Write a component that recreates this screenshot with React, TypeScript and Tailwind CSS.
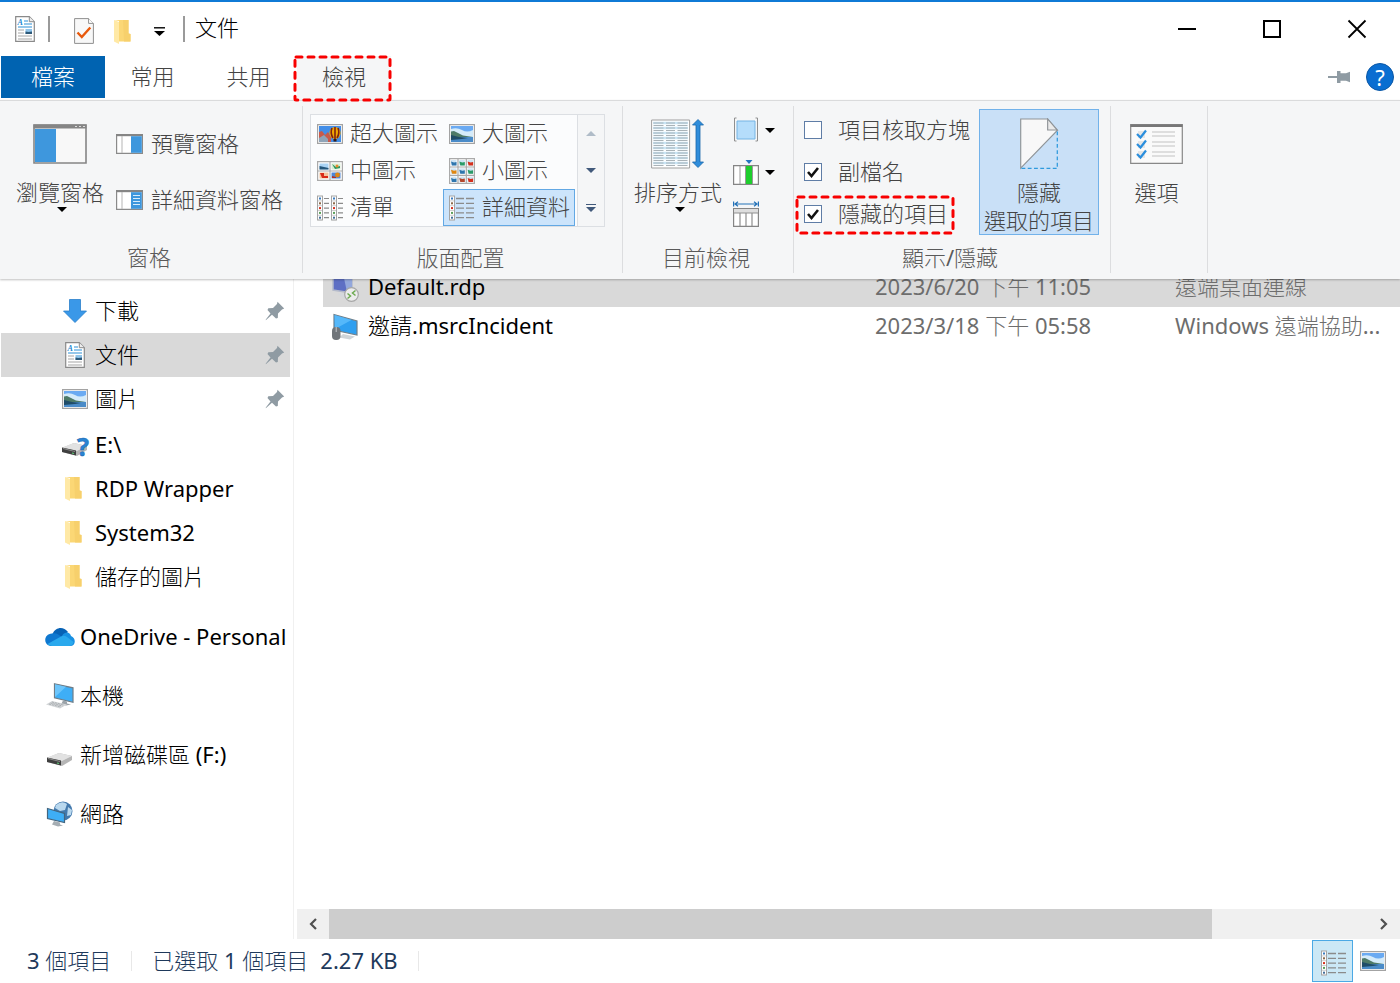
import React from 'react';

type IconProps = { className?: string };

function DocumentIcon({ className = '' }: IconProps) {
  return (
    <svg className={`h-[26px] w-5 shrink-0 overflow-visible ${className}`} viewBox="0 0 20 26">
      <path d="M.7.7h13.6l5 5v19.6H.7z" fill="#fff" stroke="#8a8a8a" strokeWidth="1.2" />
      <path d="M14.3.7v5h5" fill="#eee" stroke="#8a8a8a" />
      <text x="2.5" y="8.5" fontSize="8" fontStyle="italic" fontWeight="700" fill="#1a86d0" fontFamily="Liberation Serif, serif">A</text>
      <path d="M9 5h4M9 8h8M3 11h14" stroke="#2d8fd5" strokeWidth="1.2" />
      <path d="M3 14h6M3 17h6M3 20h14M3 23h14" stroke="#a5a5a5" strokeWidth="1.1" />
      <path d="M10.5 13H17v5h-6.5z" fill="#8fc4ea" />
      <path d="M10.5 15.5l3 .5 3.5-.5V18h-6.5z" fill="#2c5878" />
    </svg>
  );
}

function CheckedPageIcon() {
  return (
    <svg className="h-[26px] w-5 shrink-0" viewBox="0 0 20 26">
      <path d="M.6.6h14l4.8 4.8v20H.6z" fill="#f8f8f8" stroke="#909090" />
      <path d="M14.6.6v4.8h4.8" fill="#fff" stroke="#909090" />
      <path d="M3.500 14.500l4.300 4.500 8.500-9.500" fill="none" stroke="#e8590c" strokeWidth="2.400" />
    </svg>
  );
}

function FolderIcon() {
  return (
    <svg className="h-[26px] w-5 shrink-0" viewBox="2 -1 20 26">
      <path d="M2 1h14.500v13.500l2 .5v7.500H7V2z" fill="#fbd775" />
      <path d="M11 1h5.500v13.500l2 .5v7.500H12z" fill="#f7d06c" />
      <path d="M2 1l5 2v22L2 22.500z" fill="#ffe9a6" />
    </svg>
  );
}

function LandscapeIcon() {
  return (
    <svg className="h-5 w-[26px] shrink-0" viewBox="0 0 26 20">
      <path d="M.6.6h24.800v18.800H.6z" fill="#fff" stroke="#a3a3a3" strokeWidth="1.200" />
      <path d="M2 2h22v16H2z" fill="#6aaaf2" />
      <path d="M2 5q6-2 11 1t11 0v8H2z" fill="#d4ebfa" />
      <path d="M2 7.500l3-.5 4 2 5 2.500 10 1.500v1H2z" fill="#4d7a68" />
      <path d="M2 13h22v5H2z" fill="#4a8bc8" />
      <path d="M2 11l8 2 9 1-6 1-11 1z" fill="#1f4c68" />
    </svg>
  );
}

function BalloonIcon() {
  return (
    <svg className="h-5 w-[26px] shrink-0" viewBox="0 0 26 20">
      <path d="M.6.6h24.800v18.800H.6z" fill="#fff" stroke="#a3a3a3" strokeWidth="1.200" />
      <path d="M2 2h22v16H2z" fill="#438ee8" />
      <path d="M2 8l3-1 3 4 3-3 3 5v5H2z" fill="#c95a4a" />
      <path d="M2 14l5-3 4 4v3H2z" fill="#8fa4b8" />
      <ellipse cx="18" cy="9" rx="5.600" ry="6" fill="#f0a800" />
      <path d="M15 4q-2 5 1 10M18 3v12M21 4q2 5-1 10" stroke="#7d2113" strokeWidth="1.600" fill="none" />
      <path d="M16.500 15h3v2.500h-3z" fill="#3b1d12" />
    </svg>
  );
}

function MediumIcon() {
  return (
    <svg className="h-5 w-[26px] shrink-0" viewBox="0 0 26 20">
      <path d="M.6.6h24.800v18.800H.6zM13 .6v18.800M.6 10h24.800" fill="#fff" stroke="#aaa" strokeWidth="1.200" />
      <path d="M2.500 2.500h9v6h-9z" fill="#a9d3f5" />
      <path d="M2.500 5l9 2v1.500h-9z" fill="#23567b" />
      <path d="M14.500 2.500h9v6h-9z" fill="#d8ecd2" />
      <path d="M15 3l4 3 4-1v2l-5 1z" fill="#27985f" />
      <circle cx="20" cy="5" r="1.500" fill="#e58a2a" />
      <path d="M2.500 11.500h9v6h-9z" fill="#f2c29a" />
      <path d="M3 12h4v3h4v2H5z" fill="#d92a16" />
      <path d="M14.500 11.500h9v6h-9z" fill="#4d86d6" />
      <circle cx="20.500" cy="14" r="2.400" fill="#e0860f" />
      <path d="M15 15l4 1v1h-4z" fill="#b03022" />
    </svg>
  );
}

const smallTiles = ['#2f76ad', '#2b9b68', '#d5301d', '#e0860f', '#2f76ad', '#2b9b68', '#2f76ad', '#b4472c', '#d5301d'];

function SmallIcon() {
  return (
    <svg className="h-[26px] w-[26px] shrink-0" viewBox="0 0 26 26">
      <path d="M.6.6h24.800v24.800H.6zM9 .6v24.800M17.300.6v24.800M.6 9h24.800M.6 17.300h24.800" fill="#fff" stroke="#aaa" strokeWidth="1.200" />
      {smallTiles.map((color, i) => (
        <g key={i} transform={`translate(${2 + (i % 3) * 8.3} ${2 + Math.floor(i / 3) * 8.3})`}>
          <rect width="5.500" height="5.500" fill="#cfe5f5" />
          <path d="M0 1.500l3 1 2.500-.5v3.500H1z" fill={color} />
        </g>
      ))}
    </svg>
  );
}

const dotColors = ['#3a7cc0', '#8c6a4a', '#d5301d', '#5aa05a', '#44709b'];

function Strip({ x }: { x: number }) {
  return (
    <g>
      <rect x={x + 0.5} y="1" width="5" height="24" fill="#fff" stroke="#a5a5a5" />
      {dotColors.map((color, i) => (
        <g key={i}>
          <rect x={x + 2} y={2.5 + i * 4.8} width="2" height="2" fill={color} />
          <path d={`M${x + 1} ${5.9 + i * 4.8}h4`} stroke="#c5c5c5" strokeWidth=".8" />
        </g>
      ))}
    </g>
  );
}

function ListIcon() {
  return (
    <svg className="h-[26px] w-[26px] shrink-0" viewBox="0 0 26 26">
      <Strip x={0} />
      <Strip x={14} />
      <path d="M7 3.500h5M7 8.300h5M7 13.100h5M7 17.900h5M7 22.700h5M21 3.500h5M21 8.300h5M21 13.100h5M21 17.900h5M21 22.700h5" stroke="#8b8b8b" strokeWidth="1.200" />
    </svg>
  );
}

function DetailsIcon() {
  return (
    <svg className="h-[26px] w-[26px] shrink-0" viewBox="0 0 26 26">
      <Strip x={0} />
      <path d="M7 3.500h8M7 8.300h8M7 13.100h8M7 17.900h8M7 22.700h8M17 3.500h8M17 8.300h8M17 13.100h8M17 17.900h8M17 22.700h8" stroke="#8b8b8b" strokeWidth="1.300" />
    </svg>
  );
}

function NavigationPaneIcon() {
  return (
    <svg className="h-10 w-[54px]" viewBox="0 0 54 40">
      <path d="M1 1h52v38H1z" fill="#f8f8f8" stroke="#858585" strokeWidth="1.600" />
      <path d="M.5.5h53v4H.5z" fill="#858585" />
      <path d="M42 2.500h2M46 2.500h2M50 2.500h2" stroke="#ddd" />
      <path d="M2 5h21v33H2z" fill="#3e97dd" />
    </svg>
  );
}

function PreviewPaneIcon({ detailed = false }: { detailed?: boolean }) {
  return (
    <svg className="h-5 w-[27px] shrink-0" viewBox="0 0 27 20">
      <path d="M.6.6h25.800v18.800H.6z" fill="#fff" stroke="#8a8a8a" strokeWidth="1.200" />
      <path d="M0 0h27v2.200H0z" fill="#858585" />
      <path d="M6 2v17" stroke="#b5b5b5" />
      <path d="M15 2.200h10.800v16.600H15z" fill="#3e97dd" />
      {detailed && <path d="M17 5.500h7M17 8.500h7M17 11.500h7M17 14.500h7" stroke="#d8ecfb" />}
    </svg>
  );
}

const sortRows = [4, 9, 14, 19, 24, 29, 34, 39, 44];

function SortIcon() {
  return (
    <svg className="h-[50px] w-[54px]" viewBox="0 0 54 50">
      <path d="M.6 1h38v48H.6z" fill="#fff" stroke="#9f9f9f" />
      {sortRows.map((y) => (
        <g key={y}>
          <path d={`M2 ${y}h35`} stroke="#c9e5f5" strokeWidth="2.600" />
          <path d={`M2.500 ${y}h10M15 ${y}h9M26.500 ${y}h10M2.500 ${y + 2.5}h10M15 ${y + 2.5}h9M26.500 ${y + 2.5}h10`} stroke="#aab3b8" />
        </g>
      ))}
      <path d="M47 .5l5.500 5.500h-3.500v37h3.500L47 48.500 41.500 43H45V6h-3.500z" fill="#2f8ddb" stroke="#1767ab" strokeWidth=".8" />
    </svg>
  );
}

function GroupByIcon() {
  return (
    <svg className="h-[26px] w-[26px]" viewBox="0 0 26 26">
      <path d="M3.500 1H1.500v23h2M22.500 1h2v23h-2" fill="none" stroke="#8f8f8f" />
      <path d="M4 4h18v18H4z" fill="#b5ddfb" stroke="#74b4e4" />
    </svg>
  );
}

function AddColumnsIcon() {
  return (
    <svg className="h-[26px] w-[26px]" viewBox="0 0 26 26">
      <path d="M.6 6.600h24.800v18.800H.6z" fill="#fff" stroke="#858585" strokeWidth="1.200" />
      <path d="M7 7v18M12.500 7v18M19.500 7v18" stroke="#999" />
      <path d="M13 7h6v18h-6z" fill="#1fce2e" />
      <path d="M12.500 1h7L16 5z" fill="#2675bf" />
    </svg>
  );
}

function SizeColumnsIcon() {
  return (
    <svg className="h-[26px] w-[26px]" viewBox="0 0 26 26">
      <path d="M.6.5v5M25.400.5v5M2 3h22M5 .7L2 3l3 2.300M21 .7L24 3l-3 2.300" fill="none" stroke="#2472b8" strokeWidth="1.200" />
      <path d="M.6 7.600h24.800v17.800H.6z" fill="#fff" stroke="#858585" strokeWidth="1.200" />
      <path d="M1 8h24v4H1z" fill="#dedede" />
      <path d="M1 12h24M7 12v13M13 12v13M19 12v13" stroke="#8f8f8f" strokeWidth="1.200" />
    </svg>
  );
}

function HiddenPageIcon() {
  return (
    <svg className="h-[54px] w-10" viewBox="0 0 40 54">
      <path d="M1 1h28l10 12L1 52z" fill="#f8f8f8" stroke="#8f9498" strokeWidth="1.200" />
      <path d="M29 1v11.500h10z" fill="#eaeaea" stroke="#8f9498" strokeWidth="1.200" />
      <path d="M39 14v38.300H1" fill="none" stroke="#2f9add" strokeWidth="1.300" strokeDasharray="4 2.500" />
    </svg>
  );
}

function OptionsIcon() {
  return (
    <svg className="h-10 w-[53px]" viewBox="0 0 53 40">
      <path d="M.7.7h51.600v38.600H.7z" fill="#fafafa" stroke="#888" strokeWidth="1.200" />
      <path d="M.5.500h52v2.500H.5z" fill="#777" />
      {[10, 20, 30].map((y) => (
        <g key={y}>
          <rect x="8" y={y - 3} width="7" height="7" fill="#e6e6e6" />
          <path d={`M7 ${y}l3.500 3.500 5.500-7`} fill="none" stroke="#2b8fdd" strokeWidth="2.200" />
          <path d={`M22 ${y - 2}h23M22 ${y + 2}h23`} stroke="#c2c2c2" />
        </g>
      ))}
    </svg>
  );
}

function DownloadIcon() {
  return (
    <svg className="h-6 w-6 shrink-0" viewBox="0 0 24 24">
      <path d="M6.500.5h11v11.500h6L12 23.500.5 12h6z" fill="#3a98e8" stroke="#2a7fca" strokeWidth=".8" />
    </svg>
  );
}

function DriveBody() {
  return (
    <>
      <path d="M1 9l12-5 13 3v4l-10 6-15-4z" fill="#b5b5b5" />
      <path d="M1 8.500L13 4l13 3-10 5z" fill="#e2e2e2" />
      <path d="M1 8.500L15 11.500v5L1 13z" fill="#3f3f3f" />
      <path d="M2 9.500l12 3" stroke="#8a8a8a" />
      <path d="M11 14l2 .5" stroke="#5fd07a" strokeWidth="1.200" />
    </>
  );
}

function DriveIcon() {
  return (
    <svg className="mt-2 h-5 w-7 shrink-0" viewBox="0 0 28 20">
      <DriveBody />
    </svg>
  );
}

function UnknownDriveIcon() {
  return (
    <svg className="mt-1 h-6 w-7 shrink-0 overflow-visible" viewBox="0 0 28 24">
      <g transform="translate(0 5)">
        <DriveBody />
      </g>
      <text x="16" y="22" fontSize="25" fontWeight="700" fill="#2a84d2" stroke="#1a66b0" strokeWidth=".5" fontFamily="Noto Sans, sans-serif">?</text>
    </svg>
  );
}

function CloudIcon() {
  return (
    <svg className="h-5 w-[30px] shrink-0" viewBox="0 0 30 20">
      <path d="M8 6C10 1 18-2 23 5l-9 8-9 3z" fill="#0762b5" />
      <path d="M7 19C-2 19-2 7 7 6.500c4-1 7 1 10 4l-6 8z" fill="#0f78d0" />
      <path d="M17 9c3-5 8-4 9 0 5 2 5 9 0 10H12z" fill="#1890e2" />
      <path d="M2.500 17L16 9.500q3-1.500 6 .5l6.500 5q-1 4-4.500 4H7q-3 0-4.500-2z" fill="#2aa9ed" />
    </svg>
  );
}

function ComputerIcon() {
  return (
    <svg className="h-[26px] w-7 shrink-0" viewBox="0 0 28 26">
      <path d="M8.500.8l18.500 4v14.500l-18.500-4.500z" fill="#3eaef6" stroke="#6f7d88" strokeWidth="1.200" />
      <path d="M9 1.300l11 2.500L9 14z" fill="#6cc5fb" />
      <path d="M17 17.500l4 1v2l4 1-5 1-5-1z" fill="#9ba3a9" />
      <path d="M6 18l15 3.500-7 4L0 21.500z" fill="#d3d6d8" />
      <path d="M3 21l12 3M6 19l12 3M4.500 20l12 3" stroke="#a0a5a8" strokeWidth=".8" strokeDasharray="2 1" />
    </svg>
  );
}

function NetworkIcon() {
  return (
    <svg className="h-[26px] w-7 shrink-0" viewBox="0 0 28 26">
      <circle cx="17" cy="10" r="9.500" fill="#4379ad" />
      <path d="M10 4q6-5 11-1l-2 6-5 1-5-3zM22 6l4 3-1 5-4 1z" fill="#b9d8ee" />
      <path d="M1.500 7.500l17 5v9l-17-4z" fill="#3eaef6" stroke="#43657f" strokeWidth="1.200" />
      <path d="M8 20l6 1.500v2l3 1-5 1-6-2z" fill="#a5adb3" />
    </svg>
  );
}

function RemoteDesktopIcon() {
  return (
    <svg className="h-7 w-7 shrink-0" viewBox="0 0 28 28">
      <path d="M2 2l19 3v14L2 16z" fill="#5e6fc4" stroke="#b4bacb" strokeWidth="1.500" />
      <path d="M13 4l8 1v14l-5-.7z" fill="#93a7dc" />
      <path d="M6 20l6-1 5 3-3 3z" fill="#d5d8dc" />
      <circle cx="20.500" cy="20.500" r="6.800" fill="#ececec" stroke="#a7a7a7" strokeWidth="1.200" />
      <path d="M16.500 19.500l3 2.500-3 2.500M24.500 16.500L21.500 19l3 2.500" fill="none" stroke="#6daa50" strokeWidth="1.500" />
    </svg>
  );
}

function AssistanceIcon() {
  return (
    <svg className="h-7 w-7 shrink-0" viewBox="0 0 28 28">
      <path d="M3 1.500l23 6.500v14L3 17z" fill="#2f9ff0" stroke="#70808c" strokeWidth="1.200" />
      <path d="M3.500 2l17 5L4 16z" fill="#55b8fa" />
      <path d="M12 21l12 2.500-5 3-11-2z" fill="#cfd4d8" />
      <rect x="1" y="14" width="8.500" height="13" rx="4" fill="#70757a" />
      <path d="M5.200 14v5" stroke="#c3c7ca" />
    </svg>
  );
}

function PinIcon({ className = '' }: IconProps) {
  return (
    <svg className={`h-5 w-5 shrink-0 ${className}`} viewBox="0 0 20 20">
      <path d="M12.500.8L19.200 7.500 17 8.500l-4 4-.2 4.500-1.800.5-4-3.800L.8 19.200.8 18.500 5.500 12.500 2.500 9l.8-1.800L8 7l4-4z" fill="#8f9ba3" />
    </svg>
  );
}

function Arrow({ className = '' }: IconProps) {
  return (
    <svg className={`h-[5px] w-[10px] shrink-0 ${className}`} viewBox="0 0 10 5">
      <path d="M0 0h10L5 5z" fill="currentColor" />
    </svg>
  );
}

// dashed marker drawn over the element it highlights
function Highlight({ className = '' }: IconProps) {
  return (
    <svg className={`pointer-events-none absolute z-20 overflow-visible ${className}`}>
      <rect width="100%" height="100%" rx="1" fill="none" stroke="#f80000" strokeWidth="3" strokeDasharray="6 6" strokeLinecap="round" />
    </svg>
  );
}

function TitleBar() {
  return (
    <header className="flex h-14 items-center border-t-2 border-[#0f7ad6] pl-[15px] pr-px">
      <DocumentIcon />
      <span className="ml-[13px] h-[26px] w-[2px] bg-[#9a9a9a]" />
      <button aria-label="內容" className="ml-6 mt-1"><CheckedPageIcon /></button>
      <button aria-label="新增資料夾" className="ml-5 mt-1"><FolderIcon /></button>
      <button aria-label="自訂快速存取工具列" className="ml-5 mt-1">
        <svg className="h-[9px] w-[11px]" viewBox="0 0 11 9">
          <path d="M0 .8h11" stroke="#000" strokeWidth="1.400" />
          <path d="M0 4h11L5.500 9z" />
        </svg>
      </button>
      <span className="ml-[18px] h-[26px] w-[2px] bg-[#9a9a9a]" />
      <h1 className="ml-[10px] flex-1 pb-1 text-black">文件</h1>
      <button aria-label="最小化" className="flex h-full w-[85px] items-center justify-center">
        <svg className="h-5 w-5" viewBox="0 0 20 20"><path d="M1 10h18" stroke="#000" strokeWidth="2" /></svg>
      </button>
      <button aria-label="最大化" className="flex h-full w-[85px] items-center justify-center">
        <svg className="h-5 w-5" viewBox="0 0 20 20"><path d="M2 2h16v16H2z" fill="none" stroke="#000" strokeWidth="2" /></svg>
      </button>
      <button aria-label="關閉" className="flex h-full w-[85px] items-center justify-center">
        <svg className="h-5 w-5" viewBox="0 0 20 20"><path d="M1.500 1.500l17 17M18.500 1.500l-17 17" stroke="#000" strokeWidth="1.800" /></svg>
      </button>
    </header>
  );
}

function TabBar() {
  return (
    <nav className="flex h-11 pl-px text-[#444]">
      <button className="h-[42px] w-[104px] bg-[#0063b1] pb-[2px] text-white">檔案</button>
      <button className="h-[42px] w-[95px] pb-[2px]">常用</button>
      <button className="h-[42px] w-[97px] pb-[2px]">共用</button>
      <button className="relative h-11 w-[94px] bg-[#f5f6f7] pb-1">
        檢視
        <Highlight className="-left-[2px] top-[1px] h-[43px] w-[95px]" />
      </button>
      <div className="ml-auto flex h-[42px] items-center gap-4 pr-[6px]">
        <button aria-label="釘選功能區">
          <svg className="h-3 w-[22px]" viewBox="0 0 22 12">
            <path d="M0 6h9" stroke="#8f9ba3" strokeWidth="2" />
            <path d="M9 0h3.500v2.200h5.500L22 .8v10.400L18 9.800h-5.500V12H9z" fill="#8f9ba3" />
          </svg>
        </button>
        <button className="h-7 w-7 rounded-full border border-[#0a57a5] bg-[#0a6ed1] leading-6 text-white">?</button>
      </div>
    </nav>
  );
}

function Group({ label, className, children }: { label?: string; className: string; children: React.ReactNode }) {
  return (
    <section className={`relative flex shrink-0 flex-col pt-2 ${className}`}>
      <div className="flex h-[126px]">{children}</div>
      <h2 className="mt-2 h-7 pr-[5px] text-center leading-7 text-[#5a5a5a]">{label}</h2>
      <span className="absolute right-0 top-[5px] h-[167px] w-px bg-[#dcdddf]" />
    </section>
  );
}

const layouts = [
  { label: '超大圖示', icon: <BalloonIcon /> },
  { label: '大圖示', icon: <LandscapeIcon /> },
  { label: '中圖示', icon: <MediumIcon /> },
  { label: '小圖示', icon: <SmallIcon /> },
  { label: '清單', icon: <ListIcon /> },
  { label: '詳細資料', icon: <DetailsIcon /> },
];

function LayoutGallery() {
  return (
    <div className="ml-[7px] mt-[5px] flex h-[113px] w-[295px] border border-[#dcdfe3]">
      <div className="grid flex-1 grid-cols-[132px_132px] bg-[#fbfcfd]">
        {layouts.map(({ label, icon }) => (
          <button
            key={label}
            className={`flex h-[37px] items-center gap-[7px] whitespace-nowrap border pl-[5px] ${
              label === '詳細資料' ? 'border-[#62a8e4] bg-[#cce4fb]' : 'border-transparent'
            }`}
          >
            {icon}
            <span className="pb-[3px]">{label}</span>
          </button>
        ))}
      </div>
      <div className="grid w-[27px] grid-rows-3 border-l border-[#dcdfe3] text-[#41597b]">
        <button aria-label="上一列" className="flex items-center justify-center text-[#b0bcc8]"><Arrow className="rotate-180" /></button>
        <button aria-label="下一列" className="flex items-center justify-center"><Arrow /></button>
        <button aria-label="其他" className="flex flex-col items-center justify-center gap-[2px]">
          <span className="h-px w-[10px] bg-current" />
          <Arrow />
        </button>
      </div>
    </div>
  );
}

function Option({ label, checked = false, highlighted = false }: { label: string; checked?: boolean; highlighted?: boolean }) {
  return (
    <label className="relative flex h-[42px] items-center gap-4 whitespace-nowrap">
      <span className="relative flex">
        <input type="checkbox" defaultChecked={checked} className="peer h-[18px] w-[18px] appearance-none border border-[#5f7da6] bg-white" />
        <svg className="pointer-events-none absolute left-[3px] top-[3px] hidden h-3 w-3 peer-checked:block" viewBox="0 0 12 12">
          <path d="M1 6l3.500 4L11 2" fill="none" stroke="#111" strokeWidth="2.600" />
        </svg>
      </span>
      <span className="pb-[2px]">{label}</span>
      {highlighted && <Highlight className="-left-[7px] top-[4px] h-[36px] w-[156px]" />}
    </label>
  );
}

function Ribbon() {
  return (
    <div className="relative z-10 flex h-[179px] border-t border-[#dadbdc] bg-[#f5f6f7] text-[#444] shadow-[0_1px_2px_rgba(0,0,0,0.25)]">
      <Group label="窗格" className="w-[303px]">
        <button className="flex w-[120px] flex-col items-center pt-[15px]">
          <NavigationPaneIcon />
          <span className="mt-[14px] leading-7">瀏覽窗格</span>
          <Arrow className="ml-1 mt-px text-black" />
        </button>
        <div className="-ml-1 flex flex-col gap-7 whitespace-nowrap pt-[21px]">
          <button className="flex h-7 items-center gap-2"><PreviewPaneIcon /><span className="pb-[2px]">預覽窗格</span></button>
          <button className="flex h-7 items-center gap-2"><PreviewPaneIcon detailed /><span className="pb-[2px]">詳細資料窗格</span></button>
        </div>
      </Group>
      <Group label="版面配置" className="w-80">
        <LayoutGallery />
      </Group>
      <Group label="目前檢視" className="w-[171px]">
        <button className="flex w-[110px] flex-col items-center pt-[10px]">
          <SortIcon />
          <span className="mt-[9px] leading-7">排序方式</span>
          <Arrow className="ml-1 mt-px text-black" />
        </button>
        <div className="flex flex-col text-black">
          <button aria-label="群組依據" className="flex h-[42px] items-center gap-[6px]"><GroupByIcon /><Arrow /></button>
          <button aria-label="新增欄" className="flex h-[42px] items-center gap-[6px]"><AddColumnsIcon /><Arrow /></button>
          <button aria-label="調整欄寬" className="flex h-[42px] items-center"><SizeColumnsIcon /></button>
        </div>
      </Group>
      <Group label="顯示/隱藏" className="w-[317px]">
        <div className="w-[175px] shrink-0 pl-[10px]">
          <Option label="項目核取方塊" />
          <Option label="副檔名" checked />
          <Option label="隱藏的項目" checked highlighted />
        </div>
        <button className="ml-[10px] flex w-[120px] shrink-0 flex-col items-center whitespace-nowrap border border-[#72b2ea] bg-[#c9e0f7] pt-2 leading-7">
          <HiddenPageIcon />
          <span className="mt-2">隱藏</span>
          <span>選取的項目</span>
        </button>
      </Group>
      <Group className="w-[97px]">
        <button className="flex w-full flex-col items-center pr-[6px] pt-[15px]">
          <OptionsIcon />
          <span className="mt-[14px] leading-7">選項</span>
        </button>
      </Group>
    </div>
  );
}

const pinned = [
  { label: '下載', icon: <DownloadIcon /> },
  { label: '文件', icon: <DocumentIcon />, selected: true },
  { label: '圖片', icon: <LandscapeIcon /> },
];

const recent = [
  { label: 'E:\\', icon: <UnknownDriveIcon /> },
  { label: 'RDP Wrapper', icon: <FolderIcon /> },
  { label: 'System32', icon: <FolderIcon /> },
  { label: '儲存的圖片', icon: <FolderIcon /> },
];

const roots = [
  { label: 'OneDrive - Personal', icon: <CloudIcon /> },
  { label: '本機', icon: <ComputerIcon /> },
  { label: '新增磁碟區 (F:)', icon: <DriveIcon /> },
  { label: '網路', icon: <NetworkIcon /> },
];

function Sidebar() {
  return (
    <aside className="w-[294px] shrink-0 whitespace-nowrap border-r border-[#f0f0f0] pl-px pr-[3px] pt-[10px] text-black">
      {pinned.map(({ label, icon, selected }) => (
        <a key={label} href="#" className={`flex h-11 items-center pl-[60px] pr-[5px] ${selected ? 'bg-[#d9d9d9]' : ''}`}>
          <span className="mr-[6px] flex w-7 justify-center">{icon}</span>
          <span className="pb-[2px]">{label}</span>
          <PinIcon className="ml-auto" />
        </a>
      ))}
      <div className="mt-px">
        {recent.map(({ label, icon }) => (
          <a key={label} href="#" className="flex h-11 items-center pl-[60px]">
            <span className="mr-[6px] flex w-7 justify-center">{icon}</span>
            {label}
          </a>
        ))}
      </div>
      <div className="mt-[9px]">
        {roots.map(({ label, icon }) => (
          <a key={label} href="#" className="flex h-[59px] items-center pl-11">
            <span className="mr-[5px] flex w-[30px] justify-center">{icon}</span>
            <span className="pb-[2px]">{label}</span>
          </a>
        ))}
      </div>
    </aside>
  );
}

const files = [
  { name: 'Default.rdp', date: '2023/6/20 下午 11:05', type: '遠端桌面連線', icon: <RemoteDesktopIcon />, selected: true },
  { name: '邀請.msrcIncident', date: '2023/3/18 下午 05:58', type: 'Windows 遠端協助...', icon: <AssistanceIcon /> },
];

function FileList() {
  return (
    <main className="flex min-w-0 flex-1 flex-col">
      <div className="-mt-[11px] flex-1 pl-[29px]">
        <table className="w-full table-fixed whitespace-nowrap text-[#6d6d6d]">
          <tbody>
            {files.map(({ name, date, type, icon, selected }) => (
              <tr key={name} className={`h-[39px] ${selected ? 'bg-[#d9d9d9]' : ''}`}>
                <td className="p-0 text-black">
                  <span className="flex items-center gap-[9px] pl-2">
                    {icon}
                    <span className="pb-1">{name}</span>
                  </span>
                </td>
                <td className="w-[300px] p-0 pb-1">{date}</td>
                <td className="w-[225px] p-0 pb-1">{type}</td>
              </tr>
            ))}
          </tbody>
        </table>
      </div>
      <div className="ml-[3px] flex h-[30px] bg-[#f0f0f0]">
        <button aria-label="向左捲動" className="flex w-8 items-center justify-center">
          <svg className="h-3 w-2" viewBox="0 0 8 12"><path d="M7 1L2 6l5 5" fill="none" stroke="#505050" strokeWidth="2.200" /></svg>
        </button>
        <div className="flex-1"><div className="h-full w-[85%] bg-[#cdcdcd]" /></div>
        <button aria-label="向右捲動" className="flex w-8 items-center justify-center">
          <svg className="h-3 w-2" viewBox="0 0 8 12"><path d="M1 1l5 5-5 5" fill="none" stroke="#505050" strokeWidth="2.200" /></svg>
        </button>
      </div>
    </main>
  );
}

function StatusBar() {
  return (
    <footer className="flex h-11 items-center whitespace-nowrap pl-[27px] text-[#1e395b]">
      <span className="pb-[3px]">3 個項目</span>
      <span className="mx-5 h-5 w-px bg-[#e8e8e8]" />
      <span className="pb-[3px]">已選取 1 個項目</span>
      <span className="ml-3 pb-[3px]">2.27 KB</span>
      <span className="ml-5 h-5 w-px bg-[#e8e8e8]" />
      <button aria-label="詳細資料" className="ml-auto flex h-[42px] w-[41px] items-center justify-center border border-[#4ba9e5] bg-[#cbe8f6] pl-[2px] pt-1"><DetailsIcon /></button>
      <button aria-label="大圖示" className="ml-[7px] mr-[14px]"><LandscapeIcon /></button>
    </footer>
  );
}

export default function App() {
  return (
    <div className="flex min-h-screen flex-col bg-white font-['Noto_Sans','Noto_Sans_CJK_TC_Light','Noto_Sans_CJK_TC',sans-serif] text-[22px] leading-7">
      <TitleBar />
      <TabBar />
      <Ribbon />
      <div className="flex flex-1">
        <Sidebar />
        <FileList />
      </div>
      <StatusBar />
    </div>
  );
}
